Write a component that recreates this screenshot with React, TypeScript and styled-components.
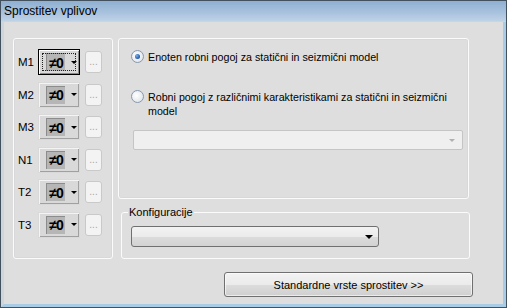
import React from 'react';
import styled, { createGlobalStyle } from 'styled-components';

const GlobalStyle = createGlobalStyle`
  html, body {
    margin: 0;
    padding: 0;
    background: #dedede;
  }
  body {
    font-family: "Liberation Sans", Arial, sans-serif;
    font-size: 10.7px;
    color: #000;
  }
`;

const Window = styled.div`
  width: 507px;
  height: 308px;
  box-sizing: border-box;
  border: 1px solid #43515f;
  display: flex;
  flex-direction: column;
  background: #dedede;
  overflow: hidden;
`;

const TitleBar = styled.div`
  height: 20px;
  flex: none;
  padding-left: 3px;
  display: flex;
  align-items: center;
  font-size: 12px;
  background: linear-gradient(to bottom, #8fb0d2 0%, #a9c3de 60%, #bfd2e6 100%);
  border-bottom: 1px solid #c9d6e2;
`;

const Body = styled.div`
  flex: 1;
  display: grid;
  grid-template-columns: 100px 351px;
  grid-template-rows: 221px auto;
  column-gap: 6px;
  padding: 16px 0 0 9px;
  border-left: 3px solid #cdd5dd;
  border-right: 3px solid #a8cbe6;
  border-bottom: 3px solid #a8cbe6;
`;

const Group = styled.div`
  box-sizing: border-box;
  border: 1px solid #fbfbfb;
  border-radius: 3px;
  box-shadow: inset 0 0 0 1px rgba(200, 200, 200, 0.25);
`;

const LeftGroup = styled(Group)`
  display: grid;
  grid-auto-rows: 26px;
  row-gap: 6.5px;
  padding: 10px 0 0 4px;
`;

const FactorRow = styled.div`
  display: grid;
  grid-template-columns: 15px 42px 17px;
  column-gap: 5px;
  align-items: center;
`;

const FactorLabel = styled.span`
  font-size: 11.5px;
`;

const ValueButton = styled.button<{ $focused?: boolean }>`
  box-sizing: border-box;
  height: 26px;
  width: 42px;
  padding: 0 0 0 7px;
  margin: 0;
  display: flex;
  align-items: center;
  gap: 6px;
  font-family: inherit;
  background: #d9d9d9;
  border: 1px solid ${p => (p.$focused ? '#000' : '#d9d9d9')};
  box-shadow: ${p =>
    p.$focused
      ? 'inset 1px 1px 0 #fff, inset -1px -1px 0 #8a8a8a'
      : 'inset 1px 1px 0 #f4f4f4, inset -1px -1px 0 #a0a0a0'};
  outline: ${p => (p.$focused ? '1px dotted #222' : 'none')};
  outline-offset: -5px;
`;

const ValueFace = styled.span`
  box-sizing: border-box;
  width: 19px;
  height: 18px;
  display: flex;
  align-items: center;
  justify-content: center;
  background: #b6b6b6;
  border-top: 1px solid #8c8c8c;
  border-left: 1px solid #8c8c8c;
  font-family: "Liberation Sans", Arial, sans-serif;
  font-weight: bold;
  font-size: 14px;
  letter-spacing: -1px;
  color: #000;
`;

const SmallArrow = styled.span<{ $color?: string }>`
  width: 0;
  height: 0;
  border-left: 3px solid transparent;
  border-right: 3px solid transparent;
  border-top: 3px solid ${p => p.$color || '#000'};
`;

const DotsButton = styled.button`
  box-sizing: border-box;
  width: 17px;
  height: 22px;
  padding: 0 0 5px;
  margin: 0;
  background: #f3f3f3;
  border: 1px solid #c9c9c9;
  border-radius: 3px;
  color: #a8a8a8;
  font-family: inherit;
  font-size: 10px;
  display: flex;
  align-items: flex-end;
  justify-content: center;
`;

const RightColumn = styled.div`
  display: flex;
  flex-direction: column;
  gap: 7px;
`;

const ModelGroup = styled(Group)`
  height: 162px;
  margin-left: -1px;
  width: 351px;
  padding: 10px 6px 0 12px;
  display: flex;
  flex-direction: column;
`;

const RadioRow = styled.label<{ $gap: number }>`
  display: flex;
  align-items: flex-start;
  gap: 4px;
  line-height: 14px;
  margin-bottom: ${p => p.$gap}px;
`;

const RadioDot = styled.span<{ $checked?: boolean }>`
  flex: none;
  box-sizing: border-box;
  width: 13px;
  height: 13px;
  margin-top: 1px;
  border-radius: 50%;
  border: 1px solid #8799ad;
  background: radial-gradient(circle at 40% 40%, #ffffff 0%, #e4e8ec 70%, #c9d0d8 100%);
  display: flex;
  align-items: center;
  justify-content: center;

  &::after {
    content: '';
    display: ${p => (p.$checked ? 'block' : 'none')};
    width: 5px;
    height: 5px;
    border-radius: 50%;
    background: radial-gradient(circle at 35% 35%, #7eb0e8 0%, #2a62b0 60%, #1a3f7a 100%);
  }
`;

const RadioText = styled.span`
  padding-top: 1px;
`;

const DisabledCombo = styled.div`
  box-sizing: border-box;
  width: 330px;
  height: 20px;
  margin-left: 2px;
  background: #efefef;
  border: 1px solid #c4c4c4;
  border-radius: 2px;
  display: flex;
  align-items: center;
  justify-content: flex-end;
  padding-right: 7px;
`;

const ConfigFieldset = styled.fieldset`
  margin: 0;
  margin-left: 2px;
  width: 349px;
  box-sizing: border-box;
  height: 53px;
  padding: 7px 0 0 9px;
  border: 1px solid #fbfbfb;
  border-radius: 3px;
  min-width: 0;
`;

const ConfigLegend = styled.legend`
  padding: 0 1px;
  margin-left: -3px;
  line-height: 13px;
  font-size: 11px;
`;

const Combo = styled.div`
  box-sizing: border-box;
  width: 248px;
  height: 21px;
  border: 1px solid #707070;
  border-radius: 3px;
  background: linear-gradient(to bottom, #f2f2f2 0%, #ebebeb 50%, #dcdcdc 51%, #d2d2d2 100%);
  display: flex;
  align-items: center;
  justify-content: flex-end;
  padding-right: 5px;
`;

const ComboArrow = styled.span`
  width: 0;
  height: 0;
  border-left: 4px solid transparent;
  border-right: 4px solid transparent;
  border-top: 4px solid #000;
`;

const ButtonRow = styled.div`
  grid-column: 1 / -1;
  display: flex;
  justify-content: flex-end;
  padding-top: 13px;
  margin-right: -3px;
`;

const PushButton = styled.button`
  box-sizing: border-box;
  width: 249px;
  height: 25px;
  margin: 0;
  font-family: "Liberation Sans", Arial, sans-serif;
  font-size: 11px;
  color: #000;
  border: 1px solid #707070;
  border-radius: 3px;
  background: linear-gradient(to bottom, #f2f2f2 0%, #ebebeb 50%, #dddddd 51%, #cfcfcf 100%);
  box-shadow: inset 0 0 0 1px rgba(255, 255, 255, 0.6);
`;

const factors = ['M1', 'M2', 'M3', 'N1', 'T2', 'T3'];

export default function App() {
  return (
    <>
      <GlobalStyle />
      <Window>
        <TitleBar>Sprostitev vplivov</TitleBar>
        <Body>
          <LeftGroup>
            {factors.map((f, i) => (
              <FactorRow key={f}>
                <FactorLabel>{f}</FactorLabel>
                <ValueButton $focused={i === 0}>
                  <ValueFace>≠0</ValueFace>
                  <SmallArrow />
                </ValueButton>
                <DotsButton>...</DotsButton>
              </FactorRow>
            ))}
          </LeftGroup>
          <RightColumn>
            <ModelGroup>
              <RadioRow $gap={25}>
                <RadioDot $checked />
                <RadioText>Enoten robni pogoj za statični in seizmični model</RadioText>
              </RadioRow>
              <RadioRow $gap={12}>
                <RadioDot />
                <RadioText>
                  Robni pogoj z različnimi karakteristikami za statični in seizmični
                  <br />
                  model
                </RadioText>
              </RadioRow>
              <DisabledCombo>
                <SmallArrow $color="#b0b0b0" />
              </DisabledCombo>
            </ModelGroup>
            <ConfigFieldset>
              <ConfigLegend>Konfiguracije</ConfigLegend>
              <Combo>
                <ComboArrow />
              </Combo>
            </ConfigFieldset>
          </RightColumn>
          <ButtonRow>
            <PushButton>Standardne vrste sprostitev &gt;&gt;</PushButton>
          </ButtonRow>
        </Body>
      </Window>
    </>
  );
}
